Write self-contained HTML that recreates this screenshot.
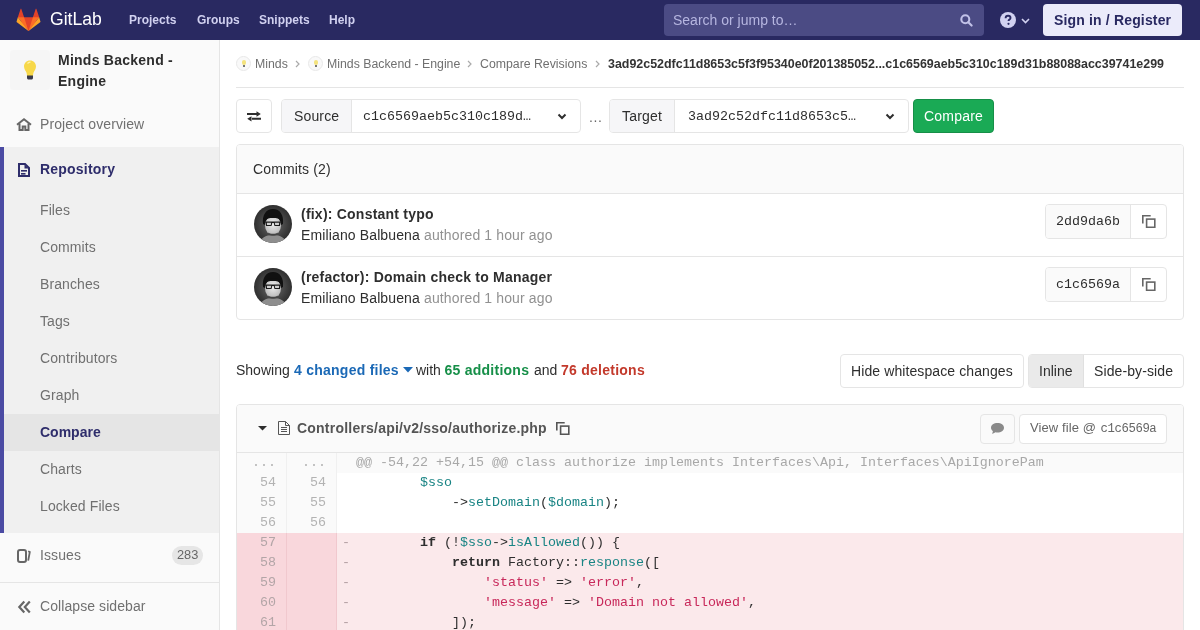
<!DOCTYPE html>
<html><head><meta charset="utf-8">
<style>
*{box-sizing:border-box;margin:0;padding:0}
html,body{width:1200px;height:630px;overflow:hidden;background:#fff;font-family:"Liberation Sans",sans-serif;font-size:14px;color:#2e2e2e}
.abs{position:absolute}
.t{position:absolute;white-space:pre;line-height:1}
.mono{font-family:"Liberation Mono",monospace}
/* header */
#hdr{position:absolute;left:0;top:0;width:1200px;height:40px;background:#292961}
.nav{color:#d1d1f0;font-weight:bold;font-size:12px}
#search{left:664px;top:4px;width:320px;height:32px;background:#4b4b84;border-radius:4px}
#signin{left:1043px;top:4px;width:139px;height:32px;background:#ebebfa;border-radius:4px}
/* sidebar */
#side{position:absolute;left:0;top:40px;width:220px;height:590px;background:#fafafa;border-right:1px solid #e5e5e5}
.sub{color:#707070;font-size:14px;letter-spacing:.1px}
/* boxes */
.bc{color:#707070;font-size:12.3px}
.ln{position:absolute;width:50px;height:20px;line-height:20px;text-align:right;padding-right:11px;font-family:"Liberation Mono",monospace;font-size:13.333px;white-space:pre}
.code{position:absolute;height:20px;line-height:20px;font-family:"Liberation Mono",monospace;font-size:13.333px;white-space:pre;color:#2e2e2e}
.v{color:#198484}.s{color:#c8285a}.k{font-weight:bold}
.bx{position:absolute;border:1px solid #e5e5e5;border-radius:4px}
body>*{will-change:transform}
</style></head><body>
<div id="hdr">
  <svg class="abs" style="left:15.5px;top:8px" width="25" height="24" viewBox="0 0 36 36">
    <path fill="#e24329" d="M2 14l9.38 9v-9l-4-12.28c-.205-.632-1.176-.632-1.38 0z"/>
    <path fill="#e24329" d="M34 14l-9.38 9v-9l4-12.28c.205-.632 1.176-.632 1.38 0z"/>
    <path fill="#e24329" d="M18 34.38L29.5 23 24.6 14H11.4L6.5 23z"/>
    <path fill="#fc6d26" d="M18 34.38L11.38 14H2z"/>
    <path fill="#fca326" d="M2 14L0.1 20.12c-.16.51.03 1.07.46 1.38L18 34.38z"/>
    <path fill="#fc6d26" d="M18 34.38L24.62 14H34z"/>
    <path fill="#fca326" d="M34 14l1.9 6.12c.16.51-.03 1.07-.46 1.38L18 34.38z"/>
  </svg>
  <div class="t" style="left:50px;top:11px;color:#fff;font-size:17.6px">GitLab</div>
  <div class="t nav" style="left:129px;top:14px">Projects</div>
  <div class="t nav" style="left:197px;top:14px">Groups</div>
  <div class="t nav" style="left:259px;top:14px">Snippets</div>
  <div class="t nav" style="left:329px;top:14px">Help</div>
  <div id="search" class="abs"></div>
  <div class="t" style="left:673px;top:13px;color:#b6b6e0;font-size:14px">Search or jump to…</div>
  <svg class="abs" style="left:960px;top:13.5px" width="13" height="13" viewBox="0 0 13 13"><circle cx="5.3" cy="5.3" r="4" fill="none" stroke="#c2c2e8" stroke-width="2.1"/><path d="M8.3 8.3l3.3 3.3" stroke="#c2c2e8" stroke-width="2.1" stroke-linecap="round"/></svg>
  <svg class="abs" style="left:1000px;top:12px" width="16" height="16" viewBox="0 0 16 16"><circle cx="8" cy="8" r="8" fill="#d1d1f0"/><path d="M5.6 6.2c0-1.5 1.1-2.4 2.5-2.4s2.4.9 2.4 2.1c0 1.6-2 1.7-2 3.1" fill="none" stroke="#292961" stroke-width="1.9"/><circle cx="8.5" cy="11.8" r="1.1" fill="#292961"/></svg>
  <svg class="abs" style="left:1021px;top:18px" width="9" height="6" viewBox="0 0 9 6"><path d="M1 1l3.5 3.5L8 1" fill="none" stroke="#d1d1f0" stroke-width="1.6"/></svg>
  <div id="signin" class="abs"></div>
  <div class="t" style="left:1054px;top:13px;color:#292961;font-weight:bold;font-size:14px;letter-spacing:.16px">Sign in / Register</div>
</div>

<div id="side">
  <div class="abs" style="left:10px;top:10px;width:40px;height:40px;background:#f6f6f6;border-radius:4px"></div>
  <svg class="abs" style="left:23px;top:20px" width="14" height="21" viewBox="0 0 14 21">
    <path d="M7 .5C3.4.5 1 3.2 1 6.4c0 2.6 1.8 4.3 2.5 6.3.4 1.1.5 2.3.5 3.3h6c0-1 .1-2.2.5-3.3.7-2 2.5-3.7 2.5-6.3C13 3.2 10.6.5 7 .5z" fill="#f7d84a"/>
    <path d="M4.5 3.5c1-1 2-1.3 3-1.3" stroke="#fff3a8" stroke-width="1.2" fill="none"/>
    <path d="M4 15.5h6v2.5c0 .8-.7 1.5-1.5 1.5h-3C4.7 19.5 4 18.8 4 18z" fill="#3a3a4a"/>
  </svg>
  <div class="t" style="left:58px;top:13px;font-weight:bold;letter-spacing:.25px">Minds Backend -</div>
  <div class="t" style="left:58px;top:34px;font-weight:bold;letter-spacing:.25px">Engine</div>
  <svg class="abs" style="left:16px;top:78px" width="16" height="13" viewBox="0 0 16 13"><path d="M1 6.8L8 1.3l7 5.5" fill="none" stroke="#666" stroke-width="2" stroke-linejoin="miter"/><path d="M3.5 5.5V12h3.2V8.5h2.6V12h3.2V5.5" fill="none" stroke="#666" stroke-width="2"/></svg>
  <div class="t sub" style="left:40px;top:77px">Project overview</div>
  <div class="abs" style="left:0;top:107px;width:219px;height:386px;background:#f0f0f0"></div>
  <div class="abs" style="left:0;top:107px;width:4px;height:386px;background:#4b4ba3"></div>
  <svg class="abs" style="left:18px;top:123px" width="12" height="14" viewBox="0 0 12 14"><path d="M1 1h6l4 4v8H1z" fill="none" stroke="#2e2d6b" stroke-width="2" stroke-linejoin="miter"/><path d="M6.5 1.5v4h4z" fill="#2e2d6b"/><rect x="3" y="7" width="6" height="1.6" fill="#2e2d6b"/><rect x="3" y="10" width="4.5" height="1.6" fill="#2e2d6b"/></svg>
  <div class="t" style="left:40px;top:122px;font-weight:bold;color:#2e2d6b;letter-spacing:.2px">Repository</div>
  <div class="t sub" style="left:40px;top:163px">Files</div>
  <div class="t sub" style="left:40px;top:200px">Commits</div>
  <div class="t sub" style="left:40px;top:237px">Branches</div>
  <div class="t sub" style="left:40px;top:274px">Tags</div>
  <div class="t sub" style="left:40px;top:311px">Contributors</div>
  <div class="t sub" style="left:40px;top:348px">Graph</div>
  <div class="abs" style="left:4px;top:374px;width:215px;height:37px;background:#e5e5e5"></div>
  <div class="t" style="left:40px;top:385px;font-weight:bold;color:#2e2d6b">Compare</div>
  <div class="t sub" style="left:40px;top:422px">Charts</div>
  <div class="t sub" style="left:40px;top:459px">Locked Files</div>
  <svg class="abs" style="left:17px;top:509px" width="14" height="14" viewBox="0 0 14 14"><rect x="1" y="1" width="8" height="12" rx="2" fill="none" stroke="#666" stroke-width="2"/><path d="M11.2 2.3L12.8 3l-1.6 8.7" fill="none" stroke="#666" stroke-width="1.8"/></svg>
  <div class="t sub" style="left:40px;top:508px">Issues</div>
  <div class="abs" style="left:172px;top:506px;width:31px;height:19px;border-radius:10px;background:#e6e6e6"></div>
  <div class="t" style="left:177px;top:509px;font-size:12.8px;color:#666">283</div>
  <div class="abs" style="left:0;top:542px;width:219px;height:1px;background:#e5e5e5"></div>
  <svg class="abs" style="left:17px;top:560px" width="14" height="14" viewBox="0 0 14 14"><path d="M7.3 1.5L2.3 7l5 5.5M12.8 1.5L7.8 7l5 5.5" fill="none" stroke="#666" stroke-width="2.2"/></svg>
  <div class="t sub" style="left:40px;top:559px;letter-spacing:.08px">Collapse sidebar</div>
</div>


<div id="content">
  <!-- breadcrumbs -->
  <div class="abs" style="left:236px;top:56px;width:15px;height:15px;border-radius:50%;background:#f9f9f9;border:1px solid #e8e8e8"></div>
  <div class="abs" style="left:241.5px;top:60px;width:4px;height:5px;border-radius:2px;background:#f4e37e"></div>
  <div class="abs" style="left:242.5px;top:65px;width:2px;height:2px;background:#777"></div>
  <div class="t bc" style="left:255px;top:58px">Minds</div>
  <svg class="abs" style="left:295px;top:60px" width="5" height="8" viewBox="0 0 5 8"><path d="M1 1l3 3-3 3" fill="none" stroke="#aaa" stroke-width="1.2"/></svg>
  <div class="abs" style="left:308px;top:56px;width:15px;height:15px;border-radius:50%;background:#f9f9f9;border:1px solid #e8e8e8"></div>
  <div class="abs" style="left:313.5px;top:60px;width:4px;height:5px;border-radius:2px;background:#f4e37e"></div>
  <div class="abs" style="left:314.5px;top:65px;width:2px;height:2px;background:#777"></div>
  <div class="t bc" style="left:327px;top:58px">Minds Backend - Engine</div>
  <svg class="abs" style="left:467px;top:60px" width="5" height="8" viewBox="0 0 5 8"><path d="M1 1l3 3-3 3" fill="none" stroke="#aaa" stroke-width="1.2"/></svg>
  <div class="t bc" style="left:480px;top:58px">Compare Revisions</div>
  <svg class="abs" style="left:595px;top:60px" width="5" height="8" viewBox="0 0 5 8"><path d="M1 1l3 3-3 3" fill="none" stroke="#aaa" stroke-width="1.2"/></svg>
  <div class="t" style="left:608px;top:58px;font-size:12.45px;font-weight:bold;color:#333">3ad92c52dfc11d8653c5f3f95340e0f201385052...c1c6569aeb5c310c189d31b88088acc39741e299</div>
  <div class="abs" style="left:236px;top:87px;width:948px;height:1px;background:#e5e5e5"></div>

  <!-- compare form -->
  <div class="bx" style="left:236px;top:99px;width:36px;height:34px"></div>
  <svg class="abs" style="left:247px;top:111px" width="14" height="11" viewBox="0 0 14 11"><path d="M0 2h10v2H0z M9.5 .2L13.8 3 9.5 5.8z M4 6.8h10v2H4z M4.5 5.2L.2 7.8l4.3 2.8z" fill="#2e2e2e"/></svg>

  <div class="bx" style="left:281px;top:99px;width:300px;height:34px;background:#fff"></div>
  <div class="abs" style="left:282px;top:100px;width:70px;height:32px;background:#f6f6f8;border-right:1px solid #e5e5e5;border-radius:3px 0 0 3px"></div>
  <div class="t" style="left:294px;top:109px;letter-spacing:.15px">Source</div>
  <div class="t mono" style="left:363px;top:110px;font-size:13.333px">c1c6569aeb5c310c189d…</div>
  <svg class="abs" style="left:557px;top:113px" width="10" height="7" viewBox="0 0 10 7"><path d="M1.5 1.5L5 5l3.5-3.5" fill="none" stroke="#2e2e2e" stroke-width="2"/></svg>
  <div class="t" style="left:589px;top:110px;color:#666;letter-spacing:.6px">...</div>

  <div class="bx" style="left:609px;top:99px;width:300px;height:34px;background:#fff"></div>
  <div class="abs" style="left:610px;top:100px;width:65px;height:32px;background:#f6f6f8;border-right:1px solid #e5e5e5;border-radius:3px 0 0 3px"></div>
  <div class="t" style="left:622px;top:109px;letter-spacing:.2px">Target</div>
  <div class="t mono" style="left:688px;top:110px;font-size:13.333px">3ad92c52dfc11d8653c5…</div>
  <svg class="abs" style="left:885px;top:113px" width="10" height="7" viewBox="0 0 10 7"><path d="M1.5 1.5L5 5l3.5-3.5" fill="none" stroke="#2e2e2e" stroke-width="2"/></svg>

  <div class="abs" style="left:913px;top:99px;width:81px;height:34px;background:#1aaa55;border:1px solid #168f48;border-radius:4px"></div>
  <div class="t" style="left:924px;top:109px;color:#fff;letter-spacing:.2px">Compare</div>

  <!-- commits box -->
  <div class="bx" style="left:236px;top:144px;width:948px;height:176px;background:#fff"></div>
  <div class="abs" style="left:237px;top:145px;width:946px;height:49px;background:#fafafa;border-bottom:1px solid #e5e5e5;border-radius:3px 3px 0 0"></div>
  <div class="t" style="left:253px;top:162px;letter-spacing:.15px">Commits (2)</div>

  <div class="abs" style="left:237px;top:256px;width:946px;height:1px;background:#e5e5e5"></div>
  <svg class="abs" style="left:254px;top:205px" width="38" height="38" viewBox="0 0 38 38">
    <defs><clipPath id="cp1"><circle cx="19" cy="19" r="19"/></clipPath>
    <radialGradient id="bg1" cx="50%" cy="50%" r="55%"><stop offset="0" stop-color="#6e6e6e"/><stop offset=".7" stop-color="#3c3c3c"/><stop offset="1" stop-color="#2a2a2a"/></radialGradient>
    <radialGradient id="fc1" cx="50%" cy="40%" r="60%"><stop offset="0" stop-color="#f0f0f0"/><stop offset="1" stop-color="#b8b8b8"/></radialGradient></defs>
    <g clip-path="url(#cp1)">
      <rect width="38" height="38" fill="url(#bg1)"/>
      <path d="M6 38c1-5 5-8 13-8s12 3 13 8z" fill="#8e8e8e"/>
      <path d="M9 19c-1-9 3-15 10-15s11 6 10 15l-2 1c-1-5-3-8-8-8s-7 3-8 8z" fill="#111"/>
      <ellipse cx="19" cy="20.5" rx="8" ry="9.5" fill="url(#fc1)"/>
      <path d="M10.5 14c2-3 4.5-4 8.5-4s6.5 1 8.5 4l-.5 1.5c-2-2-4-2.5-8-2.5s-6 .5-8 2.5z" fill="#111"/>
      <path d="M10.5 16.5h17v1h-1l-.5 3.5h-5.5l-.8-3h-1.4l-.8 3h-5.5l-.5-3.5h-1z" fill="#1a1a1a"/>
      <path d="M12.8 17.8h4.4l-.4 2.2h-3.7z M20.8 17.8h4.4l-.3 2.2h-3.7z" fill="#cfcfcf"/>
      <path d="M14 27.5c2 1.8 8 1.8 10 0l-1 2.5c-2 1-6 1-8 0z" fill="#444"/>
    </g></svg>
  <div class="t" style="left:301px;top:207px;font-weight:bold;letter-spacing:.22px">(fix): Constant typo</div>
  <div class="t" style="left:301px;top:228px;letter-spacing:.13px">Emiliano Balbuena <span style="color:#919191">authored 1 hour ago</span></div>
  <div class="bx" style="left:1045px;top:204px;width:122px;height:35px;background:#fff"></div>
  <div class="abs" style="left:1046px;top:205px;width:85px;height:33px;background:#fafafa;border-right:1px solid #e5e5e5;border-radius:3px 0 0 3px"></div>
  <div class="t mono" style="left:1056px;top:215px;font-size:13.333px">2dd9da6b</div>
  <svg class="abs" style="left:1142px;top:214px" width="14" height="14" viewBox="0 0 14 14"><path d="M8.7 1.8H.8v7.8" fill="none" stroke="#666" stroke-width="1.6"/><rect x="4.6" y="5.1" width="8.2" height="8.2" fill="none" stroke="#666" stroke-width="1.6"/></svg>

  <svg class="abs" style="left:254px;top:268px" width="38" height="38" viewBox="0 0 38 38">
    <defs><clipPath id="cp2"><circle cx="19" cy="19" r="19"/></clipPath>
    <radialGradient id="bg2" cx="50%" cy="50%" r="55%"><stop offset="0" stop-color="#6e6e6e"/><stop offset=".7" stop-color="#3c3c3c"/><stop offset="1" stop-color="#2a2a2a"/></radialGradient>
    <radialGradient id="fc2" cx="50%" cy="40%" r="60%"><stop offset="0" stop-color="#f0f0f0"/><stop offset="1" stop-color="#b8b8b8"/></radialGradient></defs>
    <g clip-path="url(#cp2)">
      <rect width="38" height="38" fill="url(#bg2)"/>
      <path d="M6 38c1-5 5-8 13-8s12 3 13 8z" fill="#8e8e8e"/>
      <path d="M9 19c-1-9 3-15 10-15s11 6 10 15l-2 1c-1-5-3-8-8-8s-7 3-8 8z" fill="#111"/>
      <ellipse cx="19" cy="20.5" rx="8" ry="9.5" fill="url(#fc2)"/>
      <path d="M10.5 14c2-3 4.5-4 8.5-4s6.5 1 8.5 4l-.5 1.5c-2-2-4-2.5-8-2.5s-6 .5-8 2.5z" fill="#111"/>
      <path d="M10.5 16.5h17v1h-1l-.5 3.5h-5.5l-.8-3h-1.4l-.8 3h-5.5l-.5-3.5h-1z" fill="#1a1a1a"/>
      <path d="M12.8 17.8h4.4l-.4 2.2h-3.7z M20.8 17.8h4.4l-.3 2.2h-3.7z" fill="#cfcfcf"/>
      <path d="M14 27.5c2 1.8 8 1.8 10 0l-1 2.5c-2 1-6 1-8 0z" fill="#444"/>
    </g></svg>
  <div class="t" style="left:301px;top:270px;font-weight:bold;letter-spacing:.22px">(refactor): Domain check to Manager</div>
  <div class="t" style="left:301px;top:291px;letter-spacing:.13px">Emiliano Balbuena <span style="color:#919191">authored 1 hour ago</span></div>
  <div class="bx" style="left:1045px;top:267px;width:122px;height:35px;background:#fff"></div>
  <div class="abs" style="left:1046px;top:268px;width:85px;height:33px;background:#fafafa;border-right:1px solid #e5e5e5;border-radius:3px 0 0 3px"></div>
  <div class="t mono" style="left:1056px;top:278px;font-size:13.333px">c1c6569a</div>
  <svg class="abs" style="left:1142px;top:277px" width="14" height="14" viewBox="0 0 14 14"><path d="M8.7 1.8H.8v7.8" fill="none" stroke="#666" stroke-width="1.6"/><rect x="4.6" y="5.1" width="8.2" height="8.2" fill="none" stroke="#666" stroke-width="1.6"/></svg>

  <!-- showing -->
  <div class="t" style="left:236px;top:363px">Showing</div>
  <div class="t" style="left:294px;top:363px;font-weight:bold;color:#1b69b6;letter-spacing:.25px">4 changed files</div>
  <svg class="abs" style="left:403px;top:367px" width="10" height="6" viewBox="0 0 10 6"><path d="M0 0h10L5 5.5z" fill="#1b69b6"/></svg>
  <div class="t" style="left:416px;top:363px">with</div>
  <div class="t" style="left:444.5px;top:363px;font-weight:bold;color:#168f48;letter-spacing:.25px">65 additions</div>
  <div class="t" style="left:534px;top:363px">and</div>
  <div class="t" style="left:561px;top:363px;font-weight:bold;color:#c3392b;letter-spacing:.25px">76 deletions</div>

  <div class="bx" style="left:840px;top:354px;width:184px;height:34px"></div>
  <div class="t" style="left:851px;top:364px;letter-spacing:.1px">Hide whitespace changes</div>
  <div class="bx" style="left:1028px;top:354px;width:156px;height:34px"></div>
  <div class="abs" style="left:1029px;top:355px;width:55px;height:32px;background:#eaeaea;border-right:1px solid #e0e0e0;border-radius:3px 0 0 3px"></div>
  <div class="t" style="left:1039px;top:364px">Inline</div>
  <div class="t" style="left:1094px;top:364px;letter-spacing:.1px">Side-by-side</div>

  <!-- file -->
  <div class="bx" style="left:236px;top:404px;width:948px;height:240px;background:#fff"></div>
  <div class="abs" style="left:237px;top:405px;width:946px;height:48px;background:#fafafa;border-bottom:1px solid #e5e5e5;border-radius:3px 3px 0 0"></div>
  <svg class="abs" style="left:258px;top:426px" width="9" height="5" viewBox="0 0 9 5"><path d="M0 0h9L4.5 4.5z" fill="#2e2e2e"/></svg>
  <svg class="abs" style="left:278px;top:421px" width="12" height="14" viewBox="0 0 12 14"><path d="M.5 .5h7l4 4v9H.5z M7.5 .5v4h4" fill="none" stroke="#555" stroke-width="1"/><path d="M3 6.5h6M3 8.5h6M3 10.5h6" stroke="#555" stroke-width="1"/></svg>
  <div class="t" style="left:297px;top:421px;font-weight:bold;color:#555;letter-spacing:.22px">Controllers/api/v2/sso/authorize.php</div>
  <svg class="abs" style="left:556px;top:421px" width="14" height="14" viewBox="0 0 14 14"><path d="M8.7 1.8H.8v7.8" fill="none" stroke="#555" stroke-width="1.6"/><rect x="4.6" y="5.1" width="8.2" height="8.2" fill="none" stroke="#555" stroke-width="1.6"/></svg>
  <div class="bx" style="left:980px;top:414px;width:35px;height:30px;background:#fafafa"></div>
  <svg class="abs" style="left:990px;top:422px" width="15" height="13" viewBox="0 0 15 13"><path d="M7.5 1C3.9 1 1 3.1 1 5.7c0 1.3.7 2.5 1.9 3.3L2.2 12l3.3-1.8c.6.2 1.3.3 2 .3 3.6 0 6.5-2.1 6.5-4.8S11.1 1 7.5 1z" fill="#8a8a8a"/></svg>
  <div class="bx" style="left:1019px;top:414px;width:148px;height:30px;background:#fff"></div>
  <div class="t" style="left:1030px;top:421px;font-size:13px;color:#666;letter-spacing:.1px">View file @ </div><div class="t mono" style="left:1100.5px;top:422.5px;font-size:12.3px;letter-spacing:-.4px;color:#666">c1c6569a</div>

  <div class="abs" style="left:237px;top:453px;width:946px;height:20px;background:#fafafa"></div><div class="abs" style="left:237px;top:453px;width:50px;height:20px;background:#fafafa;border-right:1px solid #f0f0f0"></div><div class="abs" style="left:287px;top:453px;width:50px;height:20px;background:#fafafa;border-right:1px solid #f0f0f0"></div><div class="ln" style="left:237px;top:453px;color:#b3b3b3">...</div><div class="ln" style="left:287px;top:453px;color:#b3b3b3">...</div><div class="code" style="left:356px;top:453px"><span style="color:#a8a8a8">@@ -54,22 +54,15 @@ class authorize implements Interfaces\Api, Interfaces\ApiIgnorePam</span></div>
<div class="abs" style="left:237px;top:473px;width:946px;height:20px;background:#fff"></div><div class="abs" style="left:237px;top:473px;width:50px;height:20px;background:#fafafa;border-right:1px solid #f0f0f0"></div><div class="abs" style="left:287px;top:473px;width:50px;height:20px;background:#fafafa;border-right:1px solid #f0f0f0"></div><div class="ln" style="left:237px;top:473px;color:#b3b3b3">54</div><div class="ln" style="left:287px;top:473px;color:#b3b3b3">54</div><div class="code" style="left:356px;top:473px">        <span class="v">$sso</span></div>
<div class="abs" style="left:237px;top:493px;width:946px;height:20px;background:#fff"></div><div class="abs" style="left:237px;top:493px;width:50px;height:20px;background:#fafafa;border-right:1px solid #f0f0f0"></div><div class="abs" style="left:287px;top:493px;width:50px;height:20px;background:#fafafa;border-right:1px solid #f0f0f0"></div><div class="ln" style="left:237px;top:493px;color:#b3b3b3">55</div><div class="ln" style="left:287px;top:493px;color:#b3b3b3">55</div><div class="code" style="left:356px;top:493px">            -&gt;<span class="v">setDomain</span>(<span class="v">$domain</span>);</div>
<div class="abs" style="left:237px;top:513px;width:946px;height:20px;background:#fff"></div><div class="abs" style="left:237px;top:513px;width:50px;height:20px;background:#fafafa;border-right:1px solid #f0f0f0"></div><div class="abs" style="left:287px;top:513px;width:50px;height:20px;background:#fafafa;border-right:1px solid #f0f0f0"></div><div class="ln" style="left:237px;top:513px;color:#b3b3b3">56</div><div class="ln" style="left:287px;top:513px;color:#b3b3b3">56</div><div class="code" style="left:356px;top:513px"></div>
<div class="abs" style="left:237px;top:533px;width:946px;height:20px;background:#fbe9eb"></div><div class="abs" style="left:237px;top:533px;width:50px;height:20px;background:#f9d7dc;border-right:1px solid #f1c8ce"></div><div class="abs" style="left:287px;top:533px;width:50px;height:20px;background:#f9d7dc;border-right:1px solid #f1c8ce"></div><div class="ln" style="left:237px;top:533px;color:#b3a5a7">57</div><div class="ln" style="left:287px;top:533px;color:#b3a5a7"></div><div class="code" style="left:342px;top:533px;color:#b4a0a3">-</div><div class="code" style="left:356px;top:533px">        <span class="k">if</span> (!<span class="v">$sso</span>-&gt;<span class="v">isAllowed</span>()) {</div>
<div class="abs" style="left:237px;top:553px;width:946px;height:20px;background:#fbe9eb"></div><div class="abs" style="left:237px;top:553px;width:50px;height:20px;background:#f9d7dc;border-right:1px solid #f1c8ce"></div><div class="abs" style="left:287px;top:553px;width:50px;height:20px;background:#f9d7dc;border-right:1px solid #f1c8ce"></div><div class="ln" style="left:237px;top:553px;color:#b3a5a7">58</div><div class="ln" style="left:287px;top:553px;color:#b3a5a7"></div><div class="code" style="left:342px;top:553px;color:#b4a0a3">-</div><div class="code" style="left:356px;top:553px">            <span class="k">return</span> Factory::<span class="v">response</span>([</div>
<div class="abs" style="left:237px;top:573px;width:946px;height:20px;background:#fbe9eb"></div><div class="abs" style="left:237px;top:573px;width:50px;height:20px;background:#f9d7dc;border-right:1px solid #f1c8ce"></div><div class="abs" style="left:287px;top:573px;width:50px;height:20px;background:#f9d7dc;border-right:1px solid #f1c8ce"></div><div class="ln" style="left:237px;top:573px;color:#b3a5a7">59</div><div class="ln" style="left:287px;top:573px;color:#b3a5a7"></div><div class="code" style="left:342px;top:573px;color:#b4a0a3">-</div><div class="code" style="left:356px;top:573px">                <span class="s">'status'</span> =&gt; <span class="s">'error'</span>,</div>
<div class="abs" style="left:237px;top:593px;width:946px;height:20px;background:#fbe9eb"></div><div class="abs" style="left:237px;top:593px;width:50px;height:20px;background:#f9d7dc;border-right:1px solid #f1c8ce"></div><div class="abs" style="left:287px;top:593px;width:50px;height:20px;background:#f9d7dc;border-right:1px solid #f1c8ce"></div><div class="ln" style="left:237px;top:593px;color:#b3a5a7">60</div><div class="ln" style="left:287px;top:593px;color:#b3a5a7"></div><div class="code" style="left:342px;top:593px;color:#b4a0a3">-</div><div class="code" style="left:356px;top:593px">                <span class="s">'message'</span> =&gt; <span class="s">'Domain not allowed'</span>,</div>
<div class="abs" style="left:237px;top:613px;width:946px;height:20px;background:#fbe9eb"></div><div class="abs" style="left:237px;top:613px;width:50px;height:20px;background:#f9d7dc;border-right:1px solid #f1c8ce"></div><div class="abs" style="left:287px;top:613px;width:50px;height:20px;background:#f9d7dc;border-right:1px solid #f1c8ce"></div><div class="ln" style="left:237px;top:613px;color:#b3a5a7">61</div><div class="ln" style="left:287px;top:613px;color:#b3a5a7"></div><div class="code" style="left:342px;top:613px;color:#b4a0a3">-</div><div class="code" style="left:356px;top:613px">            ]);</div>
</div>
</body></html>
